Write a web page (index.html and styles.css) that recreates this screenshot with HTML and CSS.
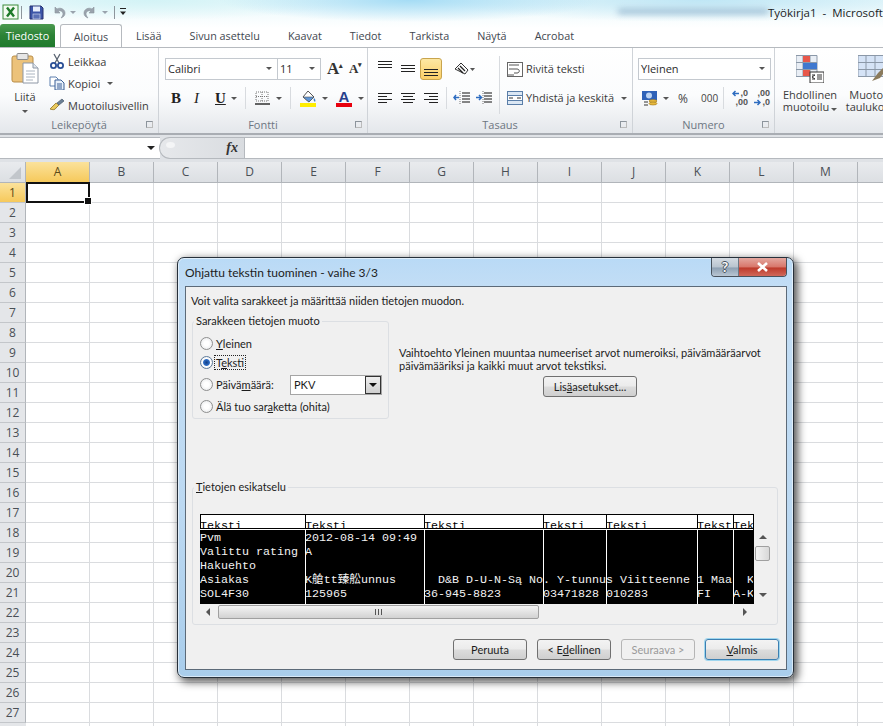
FILE: index.html
```html
<!DOCTYPE html>
<html lang="fi">
<head>
  <meta charset="UTF-8">
  <meta name="viewport" content="width=device-width, initial-scale=1.0">
  <title>Työkirja1 - Microsoft Excel</title>
  <link rel="stylesheet" href="styles.css">
</head>
<body>
  <div class="app">
    <header class="top">
      <div class="aero-smear"></div>
      <div class="titlebar">
        <svg width="18" height="16" viewBox="0 0 18 16"><rect x="1" y="1" width="15" height="14" fill="#f4fbf2" stroke="#3d8b3d"/><path d="M5 3.500l7 9M12 3.500l-7 9" stroke="#1f7a2a" stroke-width="2.400"/></svg>
        <span class="qat-sep"></span>
        <svg class="qat-save" width="15" height="15" viewBox="0 0 15 15"><path d="M1 1h11l2 2v11H1z" fill="#3c55a8" stroke="#26316f"/><rect x="4" y="1.500" width="7" height="5" fill="#e8eefc"/><rect x="4" y="9" width="7" height="5" fill="#5a6fb5" stroke="#c6cfe8" stroke-width=".7"/></svg>
        <svg class="qat-undo" width="14" height="14" viewBox="0 0 14 14"><path d="M3 2v6h5L6 6c3-1 5 1 5 3 0 1-1 3-2 4 3-1 4-3 4-5 0-4-5-6-8-4L3 2z" fill="#9aa3ad" stroke="#8c949c" stroke-width=".6"/></svg>
        <span class="caret caret-grey"></span>
        <svg class="qat-redo" width="14" height="14" viewBox="0 0 14 14"><path d="M11 2v6H6l2-2C5 5 3 7 3 9c0 1 1 3 2 4-3-1-4-3-4-5 0-4 5-6 8-4l2-2z" fill="#9aa3ad" stroke="#8c949c" stroke-width=".6"/></svg>
        <span class="caret caret-grey"></span>
        <span class="qat-sep qat-sep-b"></span>
        <svg width="8" height="10" viewBox="0 0 8 10"><path d="M1 1.500h6" stroke="#222"/><path d="M1 4.500h6L4 8z" fill="#222"/></svg>
        <span class="doc-title">Työkirja1  -  Microsoft Excel</span>
      </div>
      <nav class="tabs">
        <span class="tab tab-file">Tiedosto</span>
        <span class="tab tab-active">Aloitus</span>
        <span class="tab">Lisää</span>
        <span class="tab">Sivun asettelu</span>
        <span class="tab">Kaavat</span>
        <span class="tab">Tiedot</span>
        <span class="tab">Tarkista</span>
        <span class="tab">Näytä</span>
        <span class="tab">Acrobat</span>
      </nav>
    </header>

    <section class="ribbon">
      <!-- Leikepöytä -->
      <div class="group group-clip">
        <div class="group-body">
          <div class="paste">
            <svg width="28" height="32" viewBox="0 0 28 32"><rect x="1" y="3" width="21" height="26" rx="2" fill="#ecc27a" stroke="#b88d48"/><rect x="6" y="0.500" width="11" height="6" rx="1" fill="#e6e6e6" stroke="#8a8a8a"/><path d="M12 10h10l5 5v15H12z" fill="#fff" stroke="#8d97a5"/><path d="M22 10v5h5" fill="#dfe6ee" stroke="#8d97a5"/><path d="M15 18h9M15 21h9M15 24h9M15 27h7" stroke="#aab4c0"/></svg>
            <span class="paste-label">Liitä</span>
            <span class="caret"></span>
          </div>
          <div class="clip-col">
            <div class="clip-row">
              <svg width="16" height="16" viewBox="0 0 16 16"><path d="M5 1l5 9M11 1L6 10" stroke="#5a6472" stroke-width="1.300"/><circle cx="4.500" cy="12.500" r="2.600" fill="none" stroke="#2a4f96" stroke-width="1.800"/><circle cx="11.500" cy="12.500" r="2.600" fill="none" stroke="#2a4f96" stroke-width="1.800"/></svg>
              <span>Leikkaa</span>
            </div>
            <div class="clip-row">
              <svg width="16" height="14" viewBox="0 0 16 14"><path d="M1 1h6l2 2v7H1z" fill="#fff" stroke="#5c7fae"/><path d="M6 4h6l3 3v7H6z" fill="#e8f0fa" stroke="#3a5f96"/><path d="M8 8h5M8 10h5M8 12h5" stroke="#3a5f96"/></svg>
              <span>Kopioi</span>
              <span class="caret"></span>
            </div>
            <div class="clip-row">
              <svg width="16" height="14" viewBox="0 0 16 14"><path d="M1 11c3 1 5 1 6-1l3-3-3-2-3 3c-1 1-2 2-3 3z" fill="#e9c95e" stroke="#a2873a"/><path d="M8 5l5-4 2 2-5 4z" fill="#6b7f95" stroke="#4a5a6c" stroke-width=".7"/></svg>
              <span>Muotoilusivellin</span>
            </div>
          </div>
        </div>
        <div class="group-label">Leikepöytä<i class="launcher"></i></div>
      </div>

      <!-- Fontti -->
      <div class="group group-font">
        <div class="group-body rows">
          <div class="row">
            <span class="select font-name">Calibri<i class="caret"></i></span>
            <span class="select font-size">11<i class="caret"></i></span>
            <span class="glyph-btn grow">A<sup>▴</sup></span>
            <span class="glyph-btn shrink">A<sup>▾</sup></span>
          </div>
          <div class="row row-style">
            <span class="glyph-b">B</span>
            <span class="glyph-i">I</span>
            <span class="glyph-u">U</span>
            <span class="caret"></span>
            <span class="sep"></span>
            <svg class="border-ico" width="15" height="14" viewBox="0 0 15 14"><path d="M1 1h12v9H1zM7 1v9M1 5.500h12" fill="none" stroke="#777" stroke-dasharray="1 1"/><path d="M0 13h15" stroke="#222" stroke-width="1.400"/></svg>
            <span class="caret"></span>
            <span class="sep"></span>
            <svg class="fill-ico" width="17" height="17" viewBox="0 0 17 17"><path d="M3 7l5-6 6 6-5 5z" fill="#fff" stroke="#555"/><path d="M3 7h11l-5 5z" fill="#5d95d6" stroke="#555" stroke-width=".6"/><path d="M14 8c1 1 2 2 1 4-1-1-2-2-1-4z" fill="#3f7fc4"/><rect y="13" width="16" height="4" fill="#ffed00"/></svg>
            <span class="caret"></span>
            <span class="color-a">A</span>
            <span class="caret"></span>
          </div>
        </div>
        <div class="group-label">Fontti<i class="launcher"></i></div>
      </div>

      <!-- Tasaus -->
      <div class="group group-align">
        <div class="group-body align-wrap">
          <div class="rows align-left">
            <div class="row">
              <span class="ico-btn"><span class="lines lines-top"></span></span>
              <span class="ico-btn"><span class="lines lines-mid"></span></span>
              <span class="ico-btn ico-on"><span class="lines lines-bot"></span></span>
              <svg class="orient" width="22" height="14" viewBox="0 0 22 14"><path d="M2 7l6-6 7 7-3 4z" fill="none" stroke="#333"/><path d="M5 6l5 5M7 4l5 5" stroke="#222" stroke-width="1.300"/><path d="M17 6h5l-2.500 3z" fill="#555"/></svg>
            </div>
            <div class="row">
              <span class="ico-btn"><span class="para para-left"></span></span>
              <span class="ico-btn"><span class="para para-center"></span></span>
              <span class="ico-btn"><span class="para para-right"></span></span>
              <span class="sep sep-align"></span>
              <svg class="indent" width="18" height="14" viewBox="0 0 18 14"><path d="M9 2h8M9 5h8M9 8h8M9 11h8" stroke="#111"/><path d="M7 0v14" stroke="#777" stroke-dasharray="1 1"/><path d="M6 6.500H1M3 4l-2 2.500L3 9" fill="none" stroke="#2d6cc0" stroke-width="1.500"/></svg>
              <svg class="indent" width="18" height="14" viewBox="0 0 18 14"><path d="M9 2h8M9 5h8M9 8h8M9 11h8" stroke="#111"/><path d="M8 0v14" stroke="#777" stroke-dasharray="1 1"/><path d="M1 6.500h5M4 4l2.500 2.500L4 9" fill="none" stroke="#2d6cc0" stroke-width="1.500"/></svg>
            </div>
          </div>
          <span class="sep sep-tall"></span>
          <div class="rows wrap-col">
            <div class="row wrap-row">
              <svg width="16" height="15" viewBox="0 0 16 15"><rect x=".5" y=".5" width="15" height="14" fill="#fff" stroke="#666"/><path d="M2 3h10M2 7h8c3 0 3 4 0 4H7" fill="none" stroke="#555"/><path d="M1 13h6" stroke="#555"/></svg>
              <span>Rivitä teksti</span>
            </div>
            <div class="row wrap-row">
              <svg width="16" height="14" viewBox="0 0 16 14"><rect x=".5" y=".5" width="15" height="13" fill="#dbe7f4" stroke="#5a7ea8"/><path d="M.5 4.500h15M.5 9.500h15" stroke="#5a7ea8"/><rect x="1" y="5" width="14" height="4" fill="#fff"/><path d="M6 7H2M10 7h4" stroke="#333"/></svg>
              <span>Yhdistä ja keskitä</span>
              <span class="caret"></span>
            </div>
          </div>
        </div>
        <div class="group-label">Tasaus<i class="launcher"></i></div>
      </div>

      <!-- Numero -->
      <div class="group group-num">
        <div class="group-body rows">
          <div class="row">
            <span class="select num-format">Yleinen<i class="caret"></i></span>
          </div>
          <div class="row num-row">
            <svg width="17" height="17" viewBox="0 0 17 17"><rect x="0" y="1" width="15" height="9" fill="#2f62b8"/><circle cx="7" cy="5.500" r="3" fill="#bcd3f2"/><ellipse cx="11" cy="11" rx="4" ry="1.500" fill="#e8b93c" stroke="#9a7520" stroke-width=".6"/><ellipse cx="11" cy="13.500" rx="4" ry="1.500" fill="#e8b93c" stroke="#9a7520" stroke-width=".6"/><path d="M2 12h4M2 15h4" stroke="#333"/></svg>
            <span class="caret"></span>
            <span class="num-glyph percent">%</span>
            <span class="num-glyph thousands">000</span>
            <span class="sep"></span>
            <span class="dec">
              <span class="dec-line"><svg width="7" height="7" viewBox="0 0 7 7"><path d="M7 3.500H1M3.500 1L1 3.500 3.500 6" fill="none" stroke="#2d6cc0" stroke-width="1.500"/></svg>,0</span>
              <span class="dec-line">,00</span>
            </span>
            <span class="dec">
              <span class="dec-line">,00</span>
              <span class="dec-line"><svg width="7" height="7" viewBox="0 0 7 7"><path d="M0 3.500h6M3.500 1L6 3.500 3.500 6" fill="none" stroke="#2d6cc0" stroke-width="1.500"/></svg>,0</span>
            </span>
          </div>
        </div>
        <div class="group-label">Numero<i class="launcher"></i></div>
      </div>

      <!-- Tyylit, leikkautuu ikkunan reunaan -->
      <div class="group group-style">
        <div class="group-body style-body">
          <div class="big-btn">
            <svg width="28" height="28" viewBox="0 0 28 28"><path d="M0 .5h21v21H0zM0 7.500h21M0 14.500h21M7 .5v21M14 .5v21" fill="#e9eef5" stroke="#8b98a8"/><rect x="7" y="1" width="7" height="6" fill="#e8574a"/><rect x="7" y="8" width="14" height="6" fill="#3f78cf"/><rect x="7" y="15" width="7" height="6" fill="#e8574a"/><rect x="14" y="17" width="14" height="11" fill="#fff" stroke="#333"/><path d="M16 20h3l-3 2 3 2h-3M21 20h5M21 22h5M21 24h5" fill="none" stroke="#333"/></svg>
            <span>Ehdollinen</span>
            <span>muotoilu<i class="caret"></i></span>
          </div>
          <div class="big-btn">
            <svg width="28" height="28" viewBox="0 0 28 28"><path d="M0 .5h26v21H0zM0 7.500h26M0 14.500h26M8 .5v21M17 .5v21" fill="#d5e3f6" stroke="#8b98a8"/><path d="M14 26l6-8 6-6 2 3-6 8z" fill="#8a7a5c"/></svg>
            <span>Muotoile</span>
            <span>taulukoksi</span>
          </div>
        </div>
      </div>
    </section>

    <section class="formula">
      <div class="name-box"><i class="caret caret-black"></i></div>
      <div class="fx-box"><span class="fx">fx</span></div>
      <div class="formula-input"></div>
    </section>

    <section class="sheet">
      <div class="col-heads">
        <span class="corner"><i></i></span>
        <span class="col-head col-on">A</span><span class="col-head">B</span><span class="col-head">C</span><span class="col-head">D</span><span class="col-head">E</span><span class="col-head">F</span><span class="col-head">G</span><span class="col-head">H</span><span class="col-head">I</span><span class="col-head">J</span><span class="col-head">K</span><span class="col-head">L</span><span class="col-head">M</span><span class="col-head">N</span>
      </div>
      <div class="sheet-body">
        <div class="row-heads">
          <span class="row-head row-on">1</span><span class="row-head">2</span><span class="row-head">3</span><span class="row-head">4</span><span class="row-head">5</span><span class="row-head">6</span><span class="row-head">7</span><span class="row-head">8</span><span class="row-head">9</span><span class="row-head">10</span><span class="row-head">11</span><span class="row-head">12</span><span class="row-head">13</span><span class="row-head">14</span><span class="row-head">15</span><span class="row-head">16</span><span class="row-head">17</span><span class="row-head">18</span><span class="row-head">19</span><span class="row-head">20</span><span class="row-head">21</span><span class="row-head">22</span><span class="row-head">23</span><span class="row-head">24</span><span class="row-head">25</span><span class="row-head">26</span><span class="row-head">27</span>
        </div>
        <div class="cells"><div class="active-cell"></div></div>
      </div>
    </section>
  </div>

  <div class="dialog">
    <div class="dialog-title">
      <span>Ohjattu tekstin tuominen - vaihe 3/3</span>
      <div class="win-btns">
        <span class="win-help">?</span>
        <span class="win-close">
          <svg width="13" height="10" viewBox="0 0 13 10"><path d="M2 1l9 8M11 1L2 9" stroke="#fff" stroke-width="2.600"/></svg>
        </span>
      </div>
    </div>
    <div class="dialog-client">
      <p class="intro">Voit valita sarakkeet ja määrittää niiden tietojen muodon.</p>
      <div class="format-row">
        <fieldset class="box box-format">
          <legend>Sarakkeen tietojen muoto</legend>
          <label class="radio"><i class="dot"></i><span><u>Y</u>leinen</span></label>
          <label class="radio"><i class="dot dot-on"></i><span class="focused">T<u>e</u>ksti</span></label>
          <label class="radio"><i class="dot"></i><span>Päivä<u>m</u>äärä:</span>
            <span class="combo">PKV<i class="combo-btn"></i></span>
          </label>
          <label class="radio"><i class="dot"></i><span>Älä tuo sar<u>a</u>ketta (ohita)</span></label>
        </fieldset>
        <div class="desc">
          <p>Vaihtoehto Yleinen muuntaa numeeriset arvot numeroiksi, päivämääräarvot päivämääriksi ja kaikki muut arvot tekstiksi.</p>
          <button class="btn btn-more">Lis<u>ä</u>asetukset...</button>
        </div>
      </div>
      <fieldset class="box box-preview">
        <legend><u>T</u>ietojen esikatselu</legend>
        <div class="preview">
          <div class="table">
            <div class="pcol pcol-1"><div class="phead">Teksti</div><div class="pbody">Pvm
Valittu rating
Hakuehto
Asiakas
SOL4F30</div></div>
            <div class="pcol pcol-2"><div class="phead">Teksti</div><div class="pbody">2012-08-14 09:49
A

K艙tt臻舩unnus
125965</div></div>
            <div class="pcol pcol-3"><div class="phead">Teksti</div><div class="pbody">


  D&amp;B D-U-N-Są No
36-945-8823</div></div>
            <div class="pcol pcol-4"><div class="phead">Teksti</div><div class="pbody">


. Y-tunnu
03471828</div></div>
            <div class="pcol pcol-5"><div class="phead">Teksti</div><div class="pbody">


s Viitteenne
010283</div></div>
            <div class="pcol pcol-6"><div class="phead">Teksti</div><div class="pbody">


1 Maa
FI</div></div>
            <div class="pcol pcol-7"><div class="phead">Teksti</div><div class="pbody">


  K
A-K</div></div>
          </div>
          <div class="vscroll">
            <i class="arrow-up"></i>
            <span class="vthumb"></span>
            <i class="arrow-down"></i>
          </div>
          <div class="hscroll">
            <i class="arrow-left"></i>
            <span class="hthumb"><b></b></span>
            <i class="arrow-right"></i>
          </div>
        </div>
      </fieldset>
      <div class="actions">
        <button class="btn">Peruuta</button>
        <button class="btn">&lt; E<u>d</u>ellinen</button>
        <button class="btn btn-off">Seuraava &gt;</button>
        <button class="btn btn-default"><u>V</u>almis</button>
      </div>
    </div>
  </div>
</body>
</html>
```

FILE: styles.css
```css
* {
  box-sizing: border-box;
  margin: 0;
  padding: 0;
}

html,
body {
  width: 883px;
  height: 726px;
  overflow: hidden;
}

body {
  position: relative;
  font-family: "Open Sans", "Noto Sans", sans-serif;
  font-size: 11px;
  color: #3b3b3b;
  background: #fff;
}

i {
  font-style: normal;
}

svg {
  flex: none;
}

.caret {
  display: inline-block;
  flex: none;
  width: 0;
  height: 0;
  border-left: 3px solid transparent;
  border-right: 3px solid transparent;
  border-top: 3px solid #555;
}

.caret-grey {
  border-top-color: #9aa3ad;
}

.caret-black {
  border-left-width: 4px;
  border-right-width: 4px;
  border-top: 4px solid #222;
}

/* title area */
.top {
  position: relative;
  height: 47px;
  overflow: hidden;
  background:
    radial-gradient(ellipse 190px 22px at 410px 0, #a5dcf5 0%, rgba(165, 220, 245, 0) 100%),
    radial-gradient(ellipse 260px 22px at 700px 0, #bfe6f5 0%, rgba(191, 230, 245, 0) 100%),
    radial-gradient(ellipse 200px 20px at 150px 0, #d3f3f6 0%, rgba(211, 243, 246, 0) 100%),
    linear-gradient(to bottom, #e8f8fb 0%, #fff 60%);
}

.aero-smear {
  position: absolute;
  left: 618px;
  top: 9px;
  width: 150px;
  height: 5px;
  background: #86a9c6;
  filter: blur(3px);
  opacity: 0.75;
}

.titlebar {
  position: relative;
  display: flex;
  align-items: center;
  height: 24px;
  padding-left: 2px;
  white-space: pre;
}

.qat-sep {
  flex: none;
  width: 1px;
  height: 13px;
  margin: 0 7px 0 1px;
  background: #8d959c;
}

.qat-save {
  margin-right: 8px;
}

.qat-undo {
  margin-right: 4px;
}

.qat-redo {
  margin: 0 5px 0 7px;
}

.qat-sep-b {
  margin: 0 4px 0 6px;
}

.doc-title {
  flex: none;
  margin-left: 641px;
  font-size: 11.5px;
  color: #1d1d1d;
}

.tabs {
  position: relative;
  display: flex;
  align-items: flex-end;
  height: 23px;
  font-size: 10.8px;
  color: #3f4750;
}

.tab {
  padding: 0 14px;
  height: 23px;
  line-height: 23px;
  white-space: nowrap;
}

.tab-file {
  width: 55px;
  margin-right: 5px;
  padding: 0;
  text-align: center;
  color: #fff;
  background: linear-gradient(to bottom, #4a9a4f 0%, #2c8236 50%, #1f7a2c 100%);
  border-radius: 3px 3px 0 0;
}

.tab-active {
  width: 62px;
  padding: 0;
  text-align: center;
  background: #fff;
  border: 1px solid #b6babf;
  border-bottom: 0;
  border-radius: 3px 3px 0 0;
  height: 24px;
  margin-bottom: -1px;
}

/* ribbon */
.ribbon {
  display: flex;
  height: 88px;
  border-top: 1px solid #b6babf;
  border-bottom: 2px solid #a9adb3;
  background: linear-gradient(to bottom, #fff 0%, #fbfcfd 55%, #e4e7eb 100%);
}

.group {
  display: flex;
  flex-direction: column;
  border-right: 1px solid #cfd3d8;
}

.group-clip {
  width: 159px;
}

.group-font {
  width: 209px;
}

.group-align {
  width: 265px;
}

.group-num {
  width: 142px;
}

.group-style {
  flex: 1;
  border-right: 0;
  overflow: hidden;
}

.group-body {
  flex: 1;
  display: flex;
}

.group-label {
  position: relative;
  height: 15px;
  line-height: 13px;
  text-align: center;
  color: #6d7682;
}

.launcher {
  position: absolute;
  right: 5px;
  top: 3px;
  width: 7px;
  height: 7px;
  border: 1px solid #8c949c;
  border-right-color: #bbb;
  border-bottom-color: #bbb;
}

.rows {
  display: flex;
  flex-direction: column;
  gap: 7px;
  padding-top: 10px;
}

.row {
  display: flex;
  align-items: center;
  height: 22px;
}

.sep {
  flex: none;
  width: 1px;
  height: 22px;
  background: #d8dbdf;
}

.paste {
  display: flex;
  flex-direction: column;
  align-items: center;
  width: 49px;
  padding: 5px 0 0 1px;
  color: #3b3b3b;
}

.paste-label {
  margin: 4px 0 6px;
}

.clip-col {
  padding-top: 2px;
}

.clip-row {
  display: flex;
  align-items: center;
  gap: 3px;
  height: 22px;
  white-space: nowrap;
}

.clip-row .caret {
  margin-left: 4px;
}

.select {
  position: relative;
  display: flex;
  align-items: center;
  justify-content: space-between;
  height: 22px;
  padding: 0 5px 2px 2px;
  background: #fff;
  border: 1px solid #c4c9cf;
  color: #2c2c2c;
}

.font-name {
  width: 112px;
  margin-left: 6px;
  border-right: 0;
}

.font-size {
  width: 44px;
}

.glyph-btn {
  font-family: "Liberation Serif", serif;
  font-weight: bold;
  color: #333;
}

.glyph-btn sup {
  font-size: 7px;
  line-height: 0;
  vertical-align: 6px;
}

.grow {
  margin-left: 6px;
  width: 22px;
  font-size: 17px;
}

.shrink {
  width: 16px;
  font-size: 13px;
}

.row-style {
  padding-left: 12px;
  font-family: "Liberation Serif", serif;
  font-size: 15px;
  color: #222;
}

.glyph-b {
  width: 23px;
  font-weight: bold;
}

.glyph-i {
  width: 21px;
  font-style: italic;
}

.glyph-u {
  width: 16px;
  text-decoration: underline;
  font-weight: bold;
}

.row-style .sep {
  margin: 0 9px 0 8px;
}

.border-ico {
  margin-right: 6px;
}

.fill-ico {
  margin-right: 5px;
}

.color-a {
  width: 16px;
  margin-left: 8px;
  margin-right: 6px;
  text-align: center;
  font-family: "Liberation Sans", sans-serif;
  font-weight: bold;
  line-height: 13px;
  color: #28408c;
  border-bottom: 4px solid #e8000e;
}

.align-wrap {
  padding-left: 6px;
}

.align-left {
  width: 125px;
}

.ico-btn {
  display: flex;
  align-items: center;
  justify-content: center;
  flex: none;
  width: 22px;
  height: 22px;
  margin-right: 1px;
}

.ico-on {
  background: linear-gradient(to bottom, #fde8a3, #fbcf68);
  border: 1px solid #c8a44d;
  border-radius: 3px;
}

.lines,
.para {
  display: block;
  width: 14px;
  height: 11px;
  background: repeating-linear-gradient(to bottom, #222 0, #222 1px, transparent 1px, transparent 3px);
}

.lines-top {
  margin-bottom: 9px;
  height: 8px;
}

.lines-mid {
  height: 8px;
}

.lines-bot {
  margin-top: 7px;
  height: 8px;
}

.para-left {
  background:
    linear-gradient(#222, #222) 0 0 / 14px 1px no-repeat,
    linear-gradient(#222, #222) 0 3px / 9px 1px no-repeat,
    linear-gradient(#222, #222) 0 6px / 14px 1px no-repeat,
    linear-gradient(#222, #222) 0 9px / 9px 1px no-repeat;
}

.para-center {
  background:
    linear-gradient(#222, #222) 0 0 / 14px 1px no-repeat,
    linear-gradient(#222, #222) 2px 3px / 10px 1px no-repeat,
    linear-gradient(#222, #222) 0 6px / 14px 1px no-repeat,
    linear-gradient(#222, #222) 2px 9px / 10px 1px no-repeat;
}

.para-right {
  background:
    linear-gradient(#222, #222) 0 0 / 14px 1px no-repeat,
    linear-gradient(#222, #222) 5px 3px / 9px 1px no-repeat,
    linear-gradient(#222, #222) 0 6px / 14px 1px no-repeat,
    linear-gradient(#222, #222) 5px 9px / 9px 1px no-repeat;
}

.orient {
  margin-left: 10px;
}

.sep-align {
  margin: 0 6px 0 3px;
}

.indent {
  margin-right: 4px;
}

.sep-tall {
  width: 1px;
  height: 58px;
  margin-top: 8px;
}

.wrap-col {
  padding-left: 7px;
}

.wrap-row {
  gap: 3px;
  white-space: nowrap;
}

.wrap-row span:not(.caret) {
  padding-bottom: 2px;
}

.wrap-row .caret {
  margin-left: 4px;
}

.num-format {
  width: 133px;
  margin-left: 5px;
}

.num-row {
  padding-left: 9px;
}

.num-row .caret {
  margin-left: 4px;
}

.num-glyph {
  flex: none;
  font-size: 12px;
  color: #444;
}

.percent {
  margin-left: 9px;
  width: 23px;
}

.thousands {
  width: 22px;
  font-size: 10px;
}

.dec {
  display: flex;
  flex-direction: column;
  flex: none;
  width: 15px;
  margin-left: 7px;
  font-family: "Liberation Sans", sans-serif;
  font-size: 9px;
  font-weight: bold;
  line-height: 9px;
  color: #555;
}

.num-row .sep {
  margin-right: 2px;
}

.dec-line {
  display: flex;
  align-items: center;
  justify-content: flex-end;
  gap: 1px;
}

.style-body {
  padding: 7px 0 0 4px;
}

.big-btn {
  display: flex;
  flex-direction: column;
  align-items: center;
  width: 62px;
  flex: none;
  line-height: 12px;
  color: #3b3b3b;
  white-space: nowrap;
}

.big-btn svg {
  margin-bottom: 6px;
}

.big-btn .caret {
  margin-left: 2px;
}

/* formula bar */
.formula {
  display: flex;
  height: 27px;
  padding: 2px 0 3px;
  background: #dfe2e6;
}

.name-box {
  display: flex;
  align-items: center;
  justify-content: flex-end;
  width: 160px;
  padding-right: 5px;
  background: #fff;
  border-top: 1px solid #b5b9be;
  border-bottom: 1px solid #b5b9be;
}

.fx-box {
  position: relative;
  display: flex;
  align-items: center;
  justify-content: flex-end;
  width: 85px;
  margin-left: -1px;
  padding-right: 6px;
  background: linear-gradient(to right, #e6e8eb, #d9dce0);
  border: 1px solid #b5b9be;
  border-right: 0;
  border-radius: 11px 0 0 11px;
}

.fx-box::before {
  content: "";
  position: absolute;
  left: 6px;
  top: 4px;
  width: 9px;
  height: 6px;
  border-radius: 50%;
  background: #f4f5f6;
}

.fx {
  font-family: "Liberation Serif", serif;
  font-size: 14px;
  font-style: italic;
  font-weight: bold;
  color: #333;
}

.formula-input {
  flex: 1;
  background: #fff;
  border-left: 1px solid #b5b9be;
  border-top: 1px solid #b5b9be;
  border-bottom: 1px solid #b5b9be;
}

/* sheet */
.col-heads {
  display: flex;
  height: 21px;
  background: linear-gradient(to bottom, #e9ebee, #dcdfe3);
  border-bottom: 1px solid #b1b5ba;
}

.corner {
  display: block;
  flex: none;
  width: 26px;
  padding: 5px 0 0 9px;
  border-right: 1px solid #b1b5ba;
}

.corner i {
  display: block;
  width: 0;
  height: 0;
  border-left: 12px solid transparent;
  border-bottom: 12px solid #c2c6cb;
}

.col-head {
  flex: none;
  width: 64px;
  line-height: 20px;
  font-size: 12px;
  text-align: center;
  color: #4a4f55;
  border-right: 1px solid #b1b5ba;
}

.col-on {
  background: linear-gradient(to bottom, #fbe29b, #f6c95b);
  color: #5c4a17;
}

.sheet-body {
  display: flex;
}

.row-heads {
  width: 26px;
  flex: none;
  background: #e4e6e9;
}

.row-head {
  display: block;
  height: 20px;
  line-height: 20px;
  font-size: 12px;
  text-align: center;
  color: #4a4f55;
  border-right: 1px solid #b1b5ba;
  border-bottom: 1px solid #c3c6ca;
}

.row-on {
  background: linear-gradient(to bottom, #fbe29b, #f6c95b);
  color: #5c4a17;
}

.cells {
  position: relative;
  flex: 1;
  height: 543px;
  background-image:
    linear-gradient(to right, #dadcdf 1px, transparent 1px),
    linear-gradient(to bottom, #dadcdf 1px, transparent 1px);
  background-size: 64px 20px;
  background-position: 63px 19px;
}

.active-cell {
  position: absolute;
  left: 0;
  top: -1px;
  width: 64px;
  height: 21px;
  border: 2px solid #111;
}

.active-cell::after {
  content: "";
  position: absolute;
  right: -4px;
  bottom: -4px;
  width: 6px;
  height: 6px;
  background: #111;
  border: 1px solid #fff;
}

/* dialog window */
.dialog {
  position: absolute;
  left: 177px;
  top: 257px;
  width: 617px;
  height: 421px;
  padding: 0 6px 7px 7px;
  display: flex;
  flex-direction: column;
  font-family: "Lato", "Open Sans", sans-serif;
  font-size: 11px;
  color: #1c1c1c;
  background: linear-gradient(to bottom, #b9daf6 0%, #c4def5 8%, #bcd9f2 60%, #a9cdeb 100%);
  border: 1px solid #27303a;
  border-radius: 7px;
  box-shadow: 3px 3px 9px 1px rgba(0, 0, 0, 0.65), inset 0 0 0 1px rgba(255, 255, 255, 0.55);
}

.dialog-title {
  position: relative;
  display: flex;
  align-items: center;
  flex: none;
  height: 28px;
  font-size: 12px;
}

.win-btns {
  position: absolute;
  right: 0;
  top: 0;
  display: flex;
  height: 19px;
  border: 1px solid #48525c;
  border-top: 0;
  border-radius: 0 0 4px 4px;
  overflow: hidden;
}

.win-help {
  width: 27px;
  text-align: center;
  font-size: 14px;
  line-height: 17px;
  font-weight: bold;
  color: #f7f7f7;
  text-shadow: 1px 0 #4a5560, -1px 0 #4a5560, 0 1px #4a5560, 0 -1px #4a5560;
  background: linear-gradient(to bottom, #d4dbe2 0%, #b9c4cf 50%, #8da0b2 55%, #b9c6d3 100%);
  border-right: 1px solid #6b7885;
}

.win-close {
  display: flex;
  align-items: center;
  justify-content: center;
  width: 47px;
  background: linear-gradient(to bottom, #e4a79f 0%, #d8766a 50%, #bd3a2b 55%, #d0685a 100%);
}

.dialog-client {
  flex: 1;
  display: flex;
  flex-direction: column;
  padding: 7px 8px 0 6px;
  background: #f0f0f0;
  border: 1px solid #5c6a78;
}

.intro {
  height: 14px;
  line-height: 14px;
  margin-left: -1px;
}

.format-row {
  display: flex;
  margin-top: 6px;
}

.box {
  border: 1px solid #dcdfe3;
  border-radius: 3px;
  min-width: 0;
}

.box legend {
  padding: 0 2px;
  line-height: 14px;
}

.box-format {
  flex: none;
  width: 197px;
  height: 105px;
  padding: 6px 0 0 7px;
}

.box-format legend {
  margin-left: -6px;
}

.radio {
  display: flex;
  align-items: center;
  gap: 3px;
  height: 19px;
  margin-bottom: 3px;
}

.radio:first-of-type {
  margin-bottom: 0;
}

.dot {
  flex: none;
  display: block;
  width: 13px;
  height: 13px;
  border: 1px solid #8e8f8f;
  border-radius: 50%;
  background: radial-gradient(circle, #fff 30%, #e2e4e6 100%);
}

.dot-on {
  border-color: #5d7a9a;
  background: radial-gradient(circle, #123f86 0, #2c6cc4 38%, #fff 50%, #e2e4e6 100%);
}

.focused {
  outline: 1px dotted #222;
  padding: 0 1px;
  margin-left: -1px;
}

.combo {
  position: relative;
  display: flex;
  align-items: center;
  flex: none;
  width: 92px;
  height: 20px;
  margin: 0 6px 0 auto;
  padding-left: 3px;
  background: #fff;
  border: 1px solid #a5a5a5;
}

.combo-btn {
  position: absolute;
  right: 0;
  top: 0;
  width: 16px;
  height: 18px;
  border: 1px solid #333;
  background: linear-gradient(to bottom, #efefef, #cfcfcf);
}

.combo-btn::after {
  content: "";
  position: absolute;
  left: 3px;
  top: 6px;
  border-left: 4px solid transparent;
  border-right: 4px solid transparent;
  border-top: 4px solid #111;
}

.desc {
  display: flex;
  flex-direction: column;
  width: 380px;
  margin: 0 0 0 10px;
  padding-top: 32px;
}

.desc p {
  line-height: 13px;
}

.btn {
  width: 74px;
  height: 21px;
  font: inherit;
  color: #1c1c1c;
  background: linear-gradient(to bottom, #f3f3f3 0%, #ebebeb 48%, #dcdcdc 52%, #cfcfcf 100%);
  border: 1px solid #707070;
  border-radius: 3px;
}

.btn-more {
  width: 94px;
  margin: 4px 0 0 144px;
}

.btn-off {
  color: #9a9a9a;
  background: #f0f0f0;
  border-color: #b5b5b5;
}

.btn-default {
  border-color: #3c7fb1;
  box-shadow: 0 0 0 1px #9fd6ee;
}

.box-preview {
  flex: none;
  height: 145px;
  margin-top: 61px;
  padding: 20px 0 0 7px;
}

.box-preview legend {
  margin-left: -6px;
}

.preview {
  display: grid;
  grid-template-columns: 554px 17px;
  grid-template-rows: 90px 16px;
}

.table {
  display: flex;
  overflow: hidden;
  background: #fff;
  border-top: 1px solid #000;
  border-right: 1px solid #000;
  font-family: "Liberation Mono", "Noto Sans CJK SC", monospace;
  font-size: 11.67px;
  line-height: 14px;
  white-space: pre;
}

.pcol {
  flex: none;
  overflow: hidden;
}

.pcol-1 {
  width: 105px;
}

.pcol-2,
.pcol-3 {
  width: 119px;
}

.pcol-4 {
  width: 63px;
}

.pcol-5 {
  width: 91px;
}

.pcol-6 {
  width: 36px;
}

.pcol-7 {
  width: 20px;
}

/* the grid lines lie under the text, as in the wizard */
.phead {
  height: 14px;
  padding-top: 4px;
  overflow: hidden;
  background: #fff;
  color: #000;
  box-shadow: inset 1px 0 #000;
  border-bottom: 1px solid #000;
}

.pbody {
  height: 74px;
  margin-top: 1px;
  padding-top: 1px;
  overflow: hidden;
  background: #000;
  color: #f2f2f2;
  box-shadow: inset 1px 0 #fff;
}

.pcol-1 .pbody {
  box-shadow: none;
}

.vscroll {
  position: relative;
  margin-top: 16px;
}

.arrow-up,
.arrow-down {
  position: absolute;
  left: 5px;
  border-left: 4px solid transparent;
  border-right: 4px solid transparent;
}

.arrow-up {
  top: 5px;
  border-bottom: 4px solid #555;
}

.arrow-down {
  bottom: 7px;
  border-top: 4px solid #555;
}

.vthumb {
  position: absolute;
  left: 1px;
  top: 16px;
  width: 15px;
  height: 15px;
  background: linear-gradient(to right, #f4f4f4, #d8d8d8);
  border: 1px solid #a0a0a0;
  border-radius: 2px;
}

.hscroll {
  position: relative;
  grid-column: 1;
}

.arrow-left,
.arrow-right {
  position: absolute;
  top: 4px;
  border-top: 4px solid transparent;
  border-bottom: 4px solid transparent;
}

.arrow-left {
  left: 6px;
  border-right: 4px solid #555;
}

.arrow-right {
  right: 7px;
  border-left: 4px solid #555;
}

.hthumb {
  position: absolute;
  left: 18px;
  top: 1px;
  width: 321px;
  height: 14px;
  background: linear-gradient(to bottom, #f4f4f4, #d2d2d2);
  border: 1px solid #a0a0a0;
  border-radius: 2px;
}

.hthumb b {
  position: absolute;
  left: 156px;
  top: 3px;
  width: 7px;
  height: 6px;
  background: repeating-linear-gradient(to right, #555 0, #555 1px, transparent 1px, transparent 3px);
}

.actions {
  display: flex;
  justify-content: flex-end;
  gap: 10px;
  margin: 14px -1px 0 0;
}
```
